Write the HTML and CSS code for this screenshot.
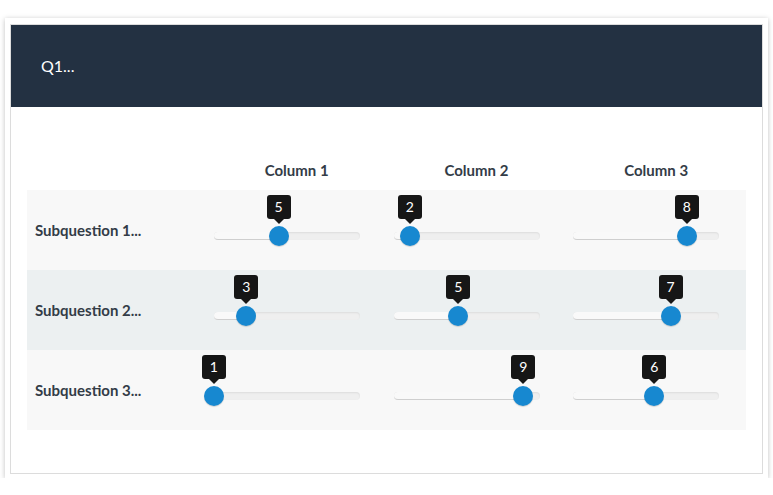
FILE: index.html
```html
<!DOCTYPE html>
<html>
<head>
<meta charset="utf-8">
<link rel="stylesheet" href="styles.css">
</head>
<body>
<div class="frame">
  <div class="card">
    <div class="card-header">Q1...</div>
    <div class="card-body">
      <div class="grid head">
        <div></div>
        <div class="colh">Column 1</div>
        <div class="colh">Column 2</div>
        <div class="colh">Column 3</div>
      </div>
      <div class="grid row odd">
        <div class="label">Subquestion 1...</div>
        <div class="cell"><div class="slider"><div class="sel" style="width:44.44%"></div><div class="knob" style="left:44.44%"><span class="tip">5</span></div></div></div>
        <div class="cell"><div class="slider"><div class="sel" style="width:11.11%"></div><div class="knob" style="left:11.11%"><span class="tip">2</span></div></div></div>
        <div class="cell"><div class="slider"><div class="sel" style="width:77.78%"></div><div class="knob" style="left:77.78%"><span class="tip">8</span></div></div></div>
      </div>
      <div class="grid row even">
        <div class="label">Subquestion 2...</div>
        <div class="cell"><div class="slider"><div class="sel" style="width:22.22%"></div><div class="knob" style="left:22.22%"><span class="tip">3</span></div></div></div>
        <div class="cell"><div class="slider"><div class="sel" style="width:44.44%"></div><div class="knob" style="left:44.44%"><span class="tip">5</span></div></div></div>
        <div class="cell"><div class="slider"><div class="sel" style="width:66.67%"></div><div class="knob" style="left:66.67%"><span class="tip">7</span></div></div></div>
      </div>
      <div class="grid row odd">
        <div class="label">Subquestion 3...</div>
        <div class="cell"><div class="slider"><div class="sel" style="width:0%"></div><div class="knob" style="left:0%"><span class="tip">1</span></div></div></div>
        <div class="cell"><div class="slider"><div class="sel" style="width:88.89%"></div><div class="knob" style="left:88.89%"><span class="tip">9</span></div></div></div>
        <div class="cell"><div class="slider"><div class="sel" style="width:55.56%"></div><div class="knob" style="left:55.56%"><span class="tip">6</span></div></div></div>
      </div>
    </div>
  </div>
</div>
</body>
</html>
```
FILE: styles.css
```css
* { box-sizing: border-box; }
html, body { margin: 0; padding: 0; background: #fff; }
body { font-family: Lato, "Open Sans", sans-serif; }

.frame {
  margin: 18px 5px 0 5px;
  width: 763px;
  height: 460px;
  padding: 6px 5px;
  background: #fff;
  box-shadow: 0 1px 5px rgba(0,0,0,0.25);
}
.card {
  border: 1px solid #dcdcdc;
  height: 450px;
  background: #fff;
}
.card-header {
  background: #233142;
  height: 82px;
  color: #fff;
  font-size: 16px;
  padding-left: 30px;
  display: flex;
  align-items: center;
  padding-bottom: 1px;
}
.card-body {
  padding: 47px 16px 0 15px;
}
.grid {
  display: grid;
  grid-template-columns: repeat(4, 1fr);
}
.head {
  height: 36px;
  align-items: end;
  padding-bottom: 11px;
}
.colh {
  text-align: center;
  font-weight: bold;
  font-size: 15px;
  color: #333c47;
}
.row { height: 80px; margin-left: 1px; }
.head { margin-left: 1px; }
.odd { background: #f8f8f8; }
.even { background: #ecf0f1; }
.label {
  display: flex;
  align-items: center;
  padding-left: 8px;
  padding-bottom: 1px;
  font-weight: bold;
  font-size: 15px;
  color: #333c47;
}
.cell { padding: 42px 0 0 7px; }
.slider {
  position: relative;
  width: 146px;
  height: 8px;
  border-radius: 4px;
  background: #efefef;
  box-shadow: inset 0 1px 2px rgba(0,0,0,0.08);
}
.sel {
  height: 8px;
  border-radius: 4px 0 0 4px;
  background: #f9f9f9;
  border-bottom: 1px solid #cfcfcf;
}
.knob {
  position: absolute;
  top: -6px;
  width: 20px;
  height: 20px;
  margin-left: -10px;
  border-radius: 50%;
  background: #1788d0;
  box-shadow: 0 1px 1px rgba(0,0,0,0.15);
}
.tip {
  position: absolute;
  left: 50%;
  bottom: 27px;
  transform: translateX(-50%);
  min-width: 24px;
  height: 24px;
  border-radius: 3px;
  background: #161616;
  color: #fff;
  font-size: 14px;
  line-height: 24px;
  text-align: center;
}
.tip::after {
  content: "";
  position: absolute;
  left: 50%;
  top: 24px;
  margin-left: -5px;
  border-left: 5px solid transparent;
  border-right: 5px solid transparent;
  border-top: 5px solid #161616;
}
```
